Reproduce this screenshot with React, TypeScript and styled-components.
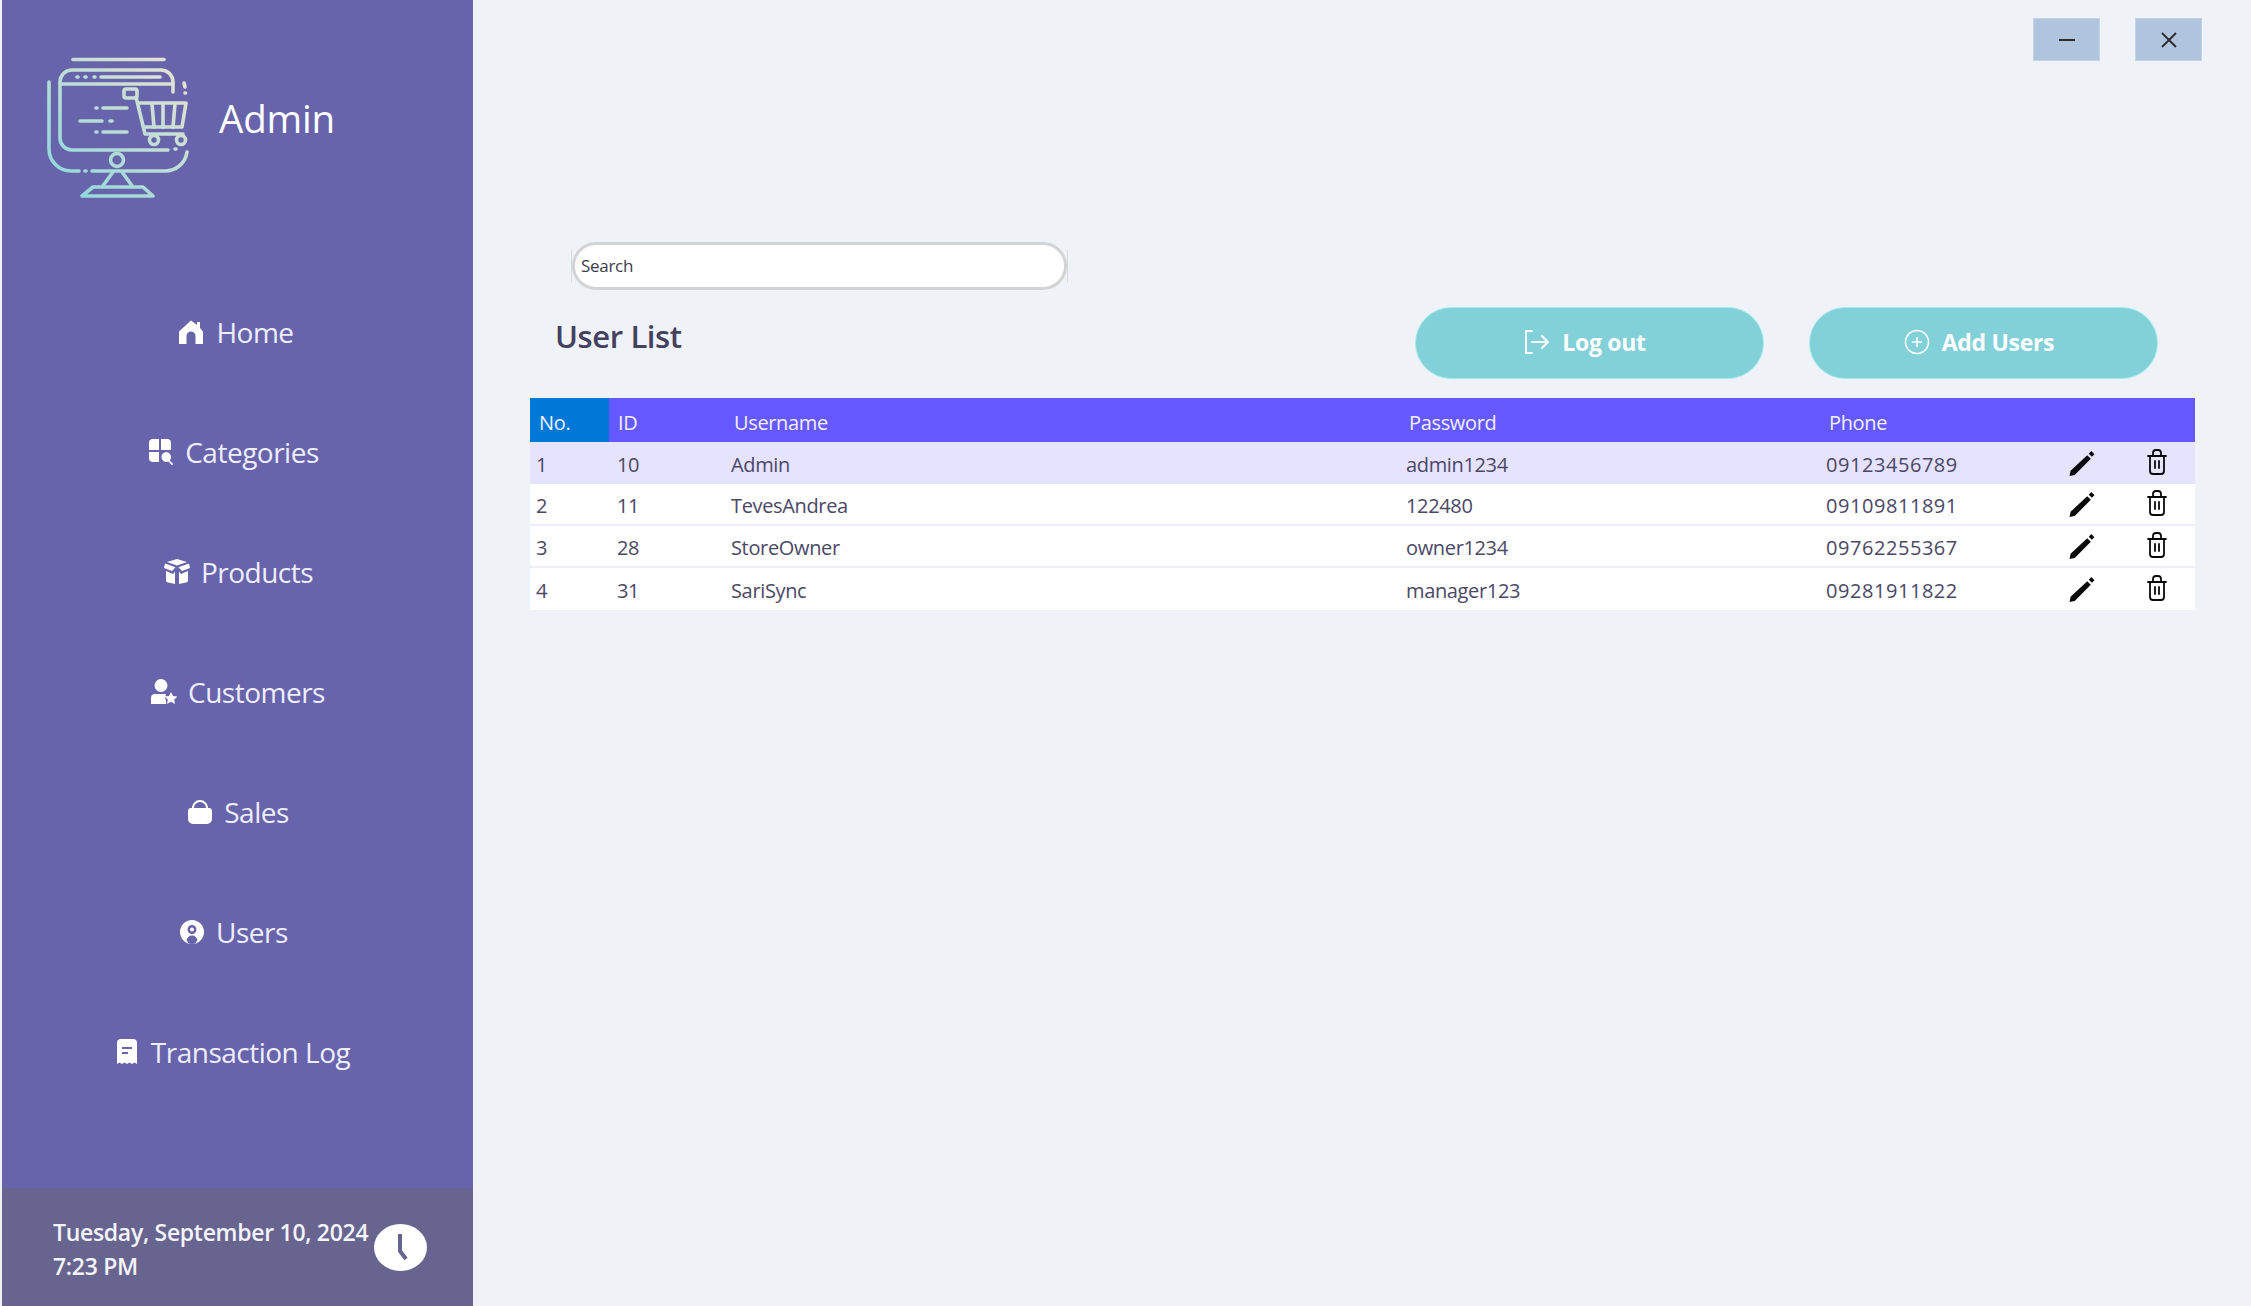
import React from 'react';
import styled, { createGlobalStyle } from 'styled-components';

const GlobalStyle = createGlobalStyle`
    html, body {
        margin: 0;
        padding: 0;
        height: 100%;
        background-color: #eff2f7;
        font-family: "Open Sans", "Noto Sans", "Liberation Sans", sans-serif;
    }
    * {
        box-sizing: border-box;
    }
`;
const Page = styled.div`
    display: flex;
    height: 100vh;
    padding-left: 2px;
    overflow: hidden;
    background-color: #eff2f7;
`;
const Sidebar = styled.aside`
    display: flex;
    flex-direction: column;
    flex: 0 0 471px;
    background-color: #6764ab;
    color: #f4f4fb;
`;
const Brand = styled.div`
    display: flex;
    align-items: flex-start;
    gap: 30px;
    height: 312px;
    padding: 57px 0 0 45px;
`;
const BrandName = styled.h1`
    margin: 35px 0 0;
    font-size: 38.5px;
    line-height: 52px;
    font-weight: 400;
    letter-spacing: -0.2px;
    color: #ffffff;
`;
const Nav = styled.nav`
    display: flex;
    flex-direction: column;
    gap: 80px;
`;
const NavItem = styled.a<{ $shift: number }>`
    display: flex;
    align-items: center;
    justify-content: center;
    gap: 11px;
    height: 40px;
    margin-left: ${(props) => props.$shift}px;
    font-size: 28px;
    letter-spacing: -0.5px;
    color: #eeeefb;
`;
const NavIcon = styled.svg`
    flex: none;
    width: 26px;
    height: 26px;
    fill: #ffffff;
`;
const Clock = styled.footer`
    display: flex;
    align-items: center;
    margin-top: auto;
    height: 118px;
    padding: 0 0 0 51px;
    background-color: #67648f;
`;
const ClockText = styled.div`
    width: 321px;
    padding-top: 3px;
    font-size: 23px;
    line-height: 34px;
    font-weight: 600;
    letter-spacing: -0.3px;
    color: #f4f4fa;
    white-space: nowrap;
`;
const ClockFace = styled.svg`
    width: 53px;
    height: 47px;
`;
const Main = styled.main`
    display: flex;
    flex-direction: column;
    flex: 1;
    padding: 18px 56px 0 57px;
`;
const WindowBar = styled.div`
    display: flex;
    justify-content: flex-end;
    gap: 35px;
    margin-right: -7px;
`;
const WindowButton = styled.button`
    display: flex;
    align-items: center;
    justify-content: center;
    width: 67px;
    height: 43px;
    padding: 0;
    border: 1px solid #c3d2e7;
    background-color: #b0c4de;
    color: #2b2b2b;
`;
const SearchBox = styled.div`
    position: relative;
    width: 495px;
    height: 48px;
    margin: 181px 0 0 42px;
    padding: 0 6px;
    border: 3px solid #d3d3d3;
    border-radius: 24px;
    background-color: #ffffff;
    font-size: 17px;
    line-height: 42px;
    letter-spacing: -0.3px;
    color: #3d3d4d;
    &::before,
    &::after {
        content: '';
        position: absolute;
        top: 5px;
        bottom: 5px;
        width: 1px;
        background-color: #d8d8d8;
    }
    &::before {
        left: -4px;
    }
    &::after {
        right: -4px;
    }
`;
const ListHeader = styled.div`
    display: flex;
    align-items: flex-start;
    justify-content: space-between;
    height: 72px;
    margin-top: 17px;
    padding: 0 37px 0 25px;
`;
const Title = styled.h2`
    margin: 7px 0 0;
    font-size: 31px;
    line-height: 44px;
    font-weight: 600;
    letter-spacing: -0.4px;
    color: #44415f;
`;
const Actions = styled.div`
    display: flex;
    gap: 45px;
`;
const ActionButton = styled.button`
    display: flex;
    align-items: center;
    justify-content: center;
    gap: 12px;
    width: 349px;
    height: 72px;
    padding: 0 9px 2px 0;
    border: 1px solid #a5ecef;
    border-radius: 36px;
    background-color: #82d0d8;
    color: #ffffff;
    font-family: inherit;
    font-size: 23px;
    font-weight: 700;
    letter-spacing: -0.3px;
`;
const Table = styled.div`
    margin-top: 19px;
    font-size: 20px;
    letter-spacing: -0.35px;
`;
const Row = styled.div<{ $bg: string; $line?: boolean }>`
    display: grid;
    grid-template-columns: 79px 122px 675px 420px 244px 77px 48px;
    align-items: center;
    height: 42px;
    padding-top: 3px;
    background-color: ${(props) => props.$bg};
    border-bottom: ${(props) => (props.$line ? '2px solid #efeefe' : 'none')};
    color: #4b4866;
`;
const HeadRow = styled(Row)`
    height: 44px;
    padding-top: 0;
    color: #f1f0ff;
`;
const Cell = styled.div<{ $pad?: number }>`
    padding-left: ${(props) => props.$pad ?? 0}px;
    white-space: nowrap;
`;
const HeadCell = styled(Cell)`
    padding-top: 4px;
`;
const NoHead = styled(HeadCell)`
    display: flex;
    align-items: center;
    height: 100%;
    background-color: #0078d7;
`;
const PhoneCell = styled(Cell)`
    letter-spacing: 0.55px;
`;
const EditIcon = styled.svg`
    display: block;
    width: 28px;
    height: 27px;
    fill: #0a0a0a;
    margin: -2px 0 0 -2px;
`;
const TrashIcon = styled.svg`
    display: block;
    width: 24px;
    height: 26px;
    fill: none;
    stroke: #0a0a0a;
    stroke-width: 1.8;
    stroke-linecap: round;
    stroke-linejoin: round;
    margin: -5px 0 0 -2px;
`;

const Logo = () => (
    <svg width="142" height="142" viewBox="47 57 142 142" fill="none" strokeWidth="3.6" strokeLinecap="round" strokeLinejoin="round">
        <defs>
            <linearGradient id="logoStroke" gradientUnits="userSpaceOnUse" x1="60" y1="190" x2="175" y2="65">
                <stop offset="0" stopColor="#8fd8dc" />
                <stop offset="1" stopColor="#e6e2d2" />
            </linearGradient>
        </defs>
        <g stroke="url(#logoStroke)">
            <path d="M73 59.5h91" />
            <path d="M173 92V82a12 12 0 0 0-12-12H72a12 12 0 0 0-12 12v56a12 12 0 0 0 12 12h96" />
            <path d="M60 84h113" />
            <path d="M77 77h1M85 77h1M94 77h1M101 77h59" />
            <path d="M49 82v67a22 22 0 0 0 22 22h8M85 171h1M92 171h73a22 22 0 0 0 22-19" />
            <path d="M175 149h1M185 93h.5M184 83l1 4" />
            <circle cx="117" cy="160" r="6.5" />
            <path d="M113 172l-11 15M122 172l11 15M93 187h50l10 9H82z" />
            <path d="M96 108h1M103 108h24M80 121h22M110 121h2M96 132h1M103 132h24" />
            <path d="M126 89h9a2 2 0 0 1 2 2v5a2 2 0 0 1-2 2h-9a2 2 0 0 1-2-2v-5a2 2 0 0 1 2-2z" />
            <path d="M136 97l9 37h38M140 103h46l-4 24h-39" />
            <path d="M152 104l2 23M163 104v23M175 104l-2 23" />
            <circle cx="154" cy="140" r="4.5" />
            <circle cx="181" cy="140" r="4.5" />
        </g>
    </svg>
);

const navItems = [
    {
        label: 'Home',
        shift: -2,
        icon: <path d="M12 1.5 L18 6 V3 H21 V9 L24 12.5 V25 H16.5 V17 A4.5 4.5 0 0 0 7.5 17 V25 H0 V12.5 Z" />,
    },
    {
        label: 'Categories',
        shift: -8,
        icon: (
            <path d="M1 4a4 4 0 0 1 4-4h6v11H1zM13 0h6a4 4 0 0 1 4 4v7H13zM1 13h10v10H5a4 4 0 0 1-4-4zM18 13a5 5 0 0 1 3.6 8.4l3.7 3.7-1.2 1.2-3.7-3.7A5 5 0 1 1 18 13z" />
        ),
    },
    {
        label: 'Products',
        shift: 2,
        icon: (
            <path d="M13 0l10 3-10 3.500L3 3zM1 4.500l10.500 3.800L8 12 0 9zM25 4.500L14.500 8.300 18 12l8-3zM2 12l7 3 2-2.500V25l-7-1.500a2 2 0 0 1-2-2zM24 12l-7 3-2-2.500V25l7-1.500a2 2 0 0 0 2-2z" />
        ),
    },
    {
        label: 'Customers',
        shift: 1,
        icon: (
            <path d="M10 0a6.500 6.500 0 1 1 0 13a6.500 6.500 0 0 1 0-13zM3 15h12l-1 4 1 2v4H0v-6a4 4 0 0 1 3-4zM20 13l2 4 4.500.6-3.300 3 .8 4.400-4-2.200-4 2.200.8-4.400-3.300-3 4.500-.6z" />
        ),
    },
    {
        label: 'Sales',
        shift: 1,
        icon: (
            <path
                fillRule="evenodd"
                d="M13 1a8 8 0 0 1 8 8h1a3 3 0 0 1 3 3v8a5 5 0 0 1-5 5H6a5 5 0 0 1-5-5v-8a3 3 0 0 1 3-3h1a8 8 0 0 1 8-8zM7 9h12a6 6 0 0 0-12 0z"
            />
        ),
    },
    {
        label: 'Users',
        shift: -8,
        icon: (
            <path
                fillRule="evenodd"
                d="M13 1a12 12 0 1 1 0 24a12 12 0 0 1 0-24zM13 6a4.500 4.500 0 1 0 0 9a4.500 4.500 0 0 0 0-9zM13 8.500a2 2 0 1 1 0 4a2 2 0 0 1 0-4zM13 16.500c-3 0-5 2-5.500 5a10 10 0 0 0 1.500 1.500V25h8v-2a10 10 0 0 0 1.500-1.500c-.5-3-2.500-5-5.500-5z"
            />
        ),
    },
    {
        label: 'Transaction Log',
        shift: -11,
        icon: (
            <path
                fillRule="evenodd"
                d="M7 0h12a4 4 0 0 1 4 4v21l-2.500-1.500L18 25l-2.500-1.500L13 25l-2.500-1.500L8 25l-2.500-1.500L3 25V4a4 4 0 0 1 4-4zM8 8v2h10V8zM8 13v2h6v-2z"
            />
        ),
    },
];

const users = [
    { no: 1, id: 10, username: 'Admin', password: 'admin1234', phone: '09123456789' },
    { no: 2, id: 11, username: 'TevesAndrea', password: '122480', phone: '09109811891' },
    { no: 3, id: 28, username: 'StoreOwner', password: 'owner1234', phone: '09762255367' },
    { no: 4, id: 31, username: 'SariSync', password: 'manager123', phone: '09281911822' },
];

export default function App(): JSX.Element {
    return (
        <Page>
            <GlobalStyle />
            <Sidebar>
                <Brand>
                    <Logo />
                    <BrandName>Admin</BrandName>
                </Brand>
                <Nav>
                    {navItems.map((item) => (
                        <NavItem key={item.label} $shift={item.shift}>
                            <NavIcon viewBox="0 0 26 26">{item.icon}</NavIcon>
                            {item.label}
                        </NavItem>
                    ))}
                </Nav>
                <Clock>
                    <ClockText>
                        Tuesday, September 10, 2024
                        <br />
                        7:23 PM
                    </ClockText>
                    <ClockFace viewBox="0 0 53 47">
                        <ellipse cx="26.500" cy="23.500" rx="26.500" ry="23.500" fill="#ffffff" />
                        <path d="M26 10v17l6 8" fill="none" stroke="#67648f" strokeWidth="4" strokeLinejoin="round" />
                    </ClockFace>
                </Clock>
            </Sidebar>
            <Main>
                <WindowBar>
                    <WindowButton aria-label="Minimize">
                        <svg width="16" height="2" viewBox="0 0 16 2">
                            <path d="M0 1h16" stroke="currentColor" strokeWidth="2" />
                        </svg>
                    </WindowButton>
                    <WindowButton aria-label="Close">
                        <svg width="16" height="16" viewBox="0 0 16 16">
                            <path d="M1 1l14 14M15 1L1 15" stroke="currentColor" strokeWidth="1.800" />
                        </svg>
                    </WindowButton>
                </WindowBar>
                <SearchBox>Search</SearchBox>
                <ListHeader>
                    <Title>User List</Title>
                    <Actions>
                        <ActionButton>
                            <svg width="26" height="26" viewBox="0 0 26 26" fill="none" stroke="currentColor" strokeWidth="2" strokeLinecap="round" strokeLinejoin="round">
                                <path d="M8 2H2v22h6M8 13h16M18 7l6 6-6 6" />
                            </svg>
                            Log out
                        </ActionButton>
                        <ActionButton>
                            <svg width="26" height="26" viewBox="0 0 26 26" fill="none" stroke="currentColor" strokeWidth="1.500" strokeLinecap="round">
                                <circle cx="13" cy="13" r="11.500" />
                                <path d="M13 8.500v9M8.500 13h9" />
                            </svg>
                            Add Users
                        </ActionButton>
                    </Actions>
                </ListHeader>
                <Table>
                    <HeadRow $bg="#6558ff">
                        <NoHead $pad={9}>No.</NoHead>
                        <HeadCell $pad={9}>ID</HeadCell>
                        <HeadCell $pad={3}>Username</HeadCell>
                        <HeadCell $pad={3}>Password</HeadCell>
                        <HeadCell $pad={3}>Phone</HeadCell>
                    </HeadRow>
                    {users.map((user, idx) => (
                        <Row key={user.id} $bg={idx === 0 ? '#e6e3ff' : '#ffffff'} $line={idx === 1 || idx === 2}>
                            <Cell $pad={6}>{user.no}</Cell>
                            <Cell $pad={8}>{user.id}</Cell>
                            <Cell>{user.username}</Cell>
                            <Cell>{user.password}</Cell>
                            <PhoneCell>{user.phone}</PhoneCell>
                            <Cell>
                                <EditIcon viewBox="0 0 26 26">
                                    <path d="M18 5l3.500 3.500L6 24 1 25l1-5zM19.500 3.500L22 1l3 3-2.500 2.500z" />
                                </EditIcon>
                            </Cell>
                            <Cell>
                                <TrashIcon viewBox="0 0 24 26">
                                    <path d="M3 7h18M8 6V4a3 3 0 0 1 3-3h2a3 3 0 0 1 3 3v2M5 7v15a3 3 0 0 0 3 3h8a3 3 0 0 0 3-3V7M10 12v7M14 12v7" />
                                </TrashIcon>
                            </Cell>
                        </Row>
                    ))}
                </Table>
            </Main>
        </Page>
    );
}
